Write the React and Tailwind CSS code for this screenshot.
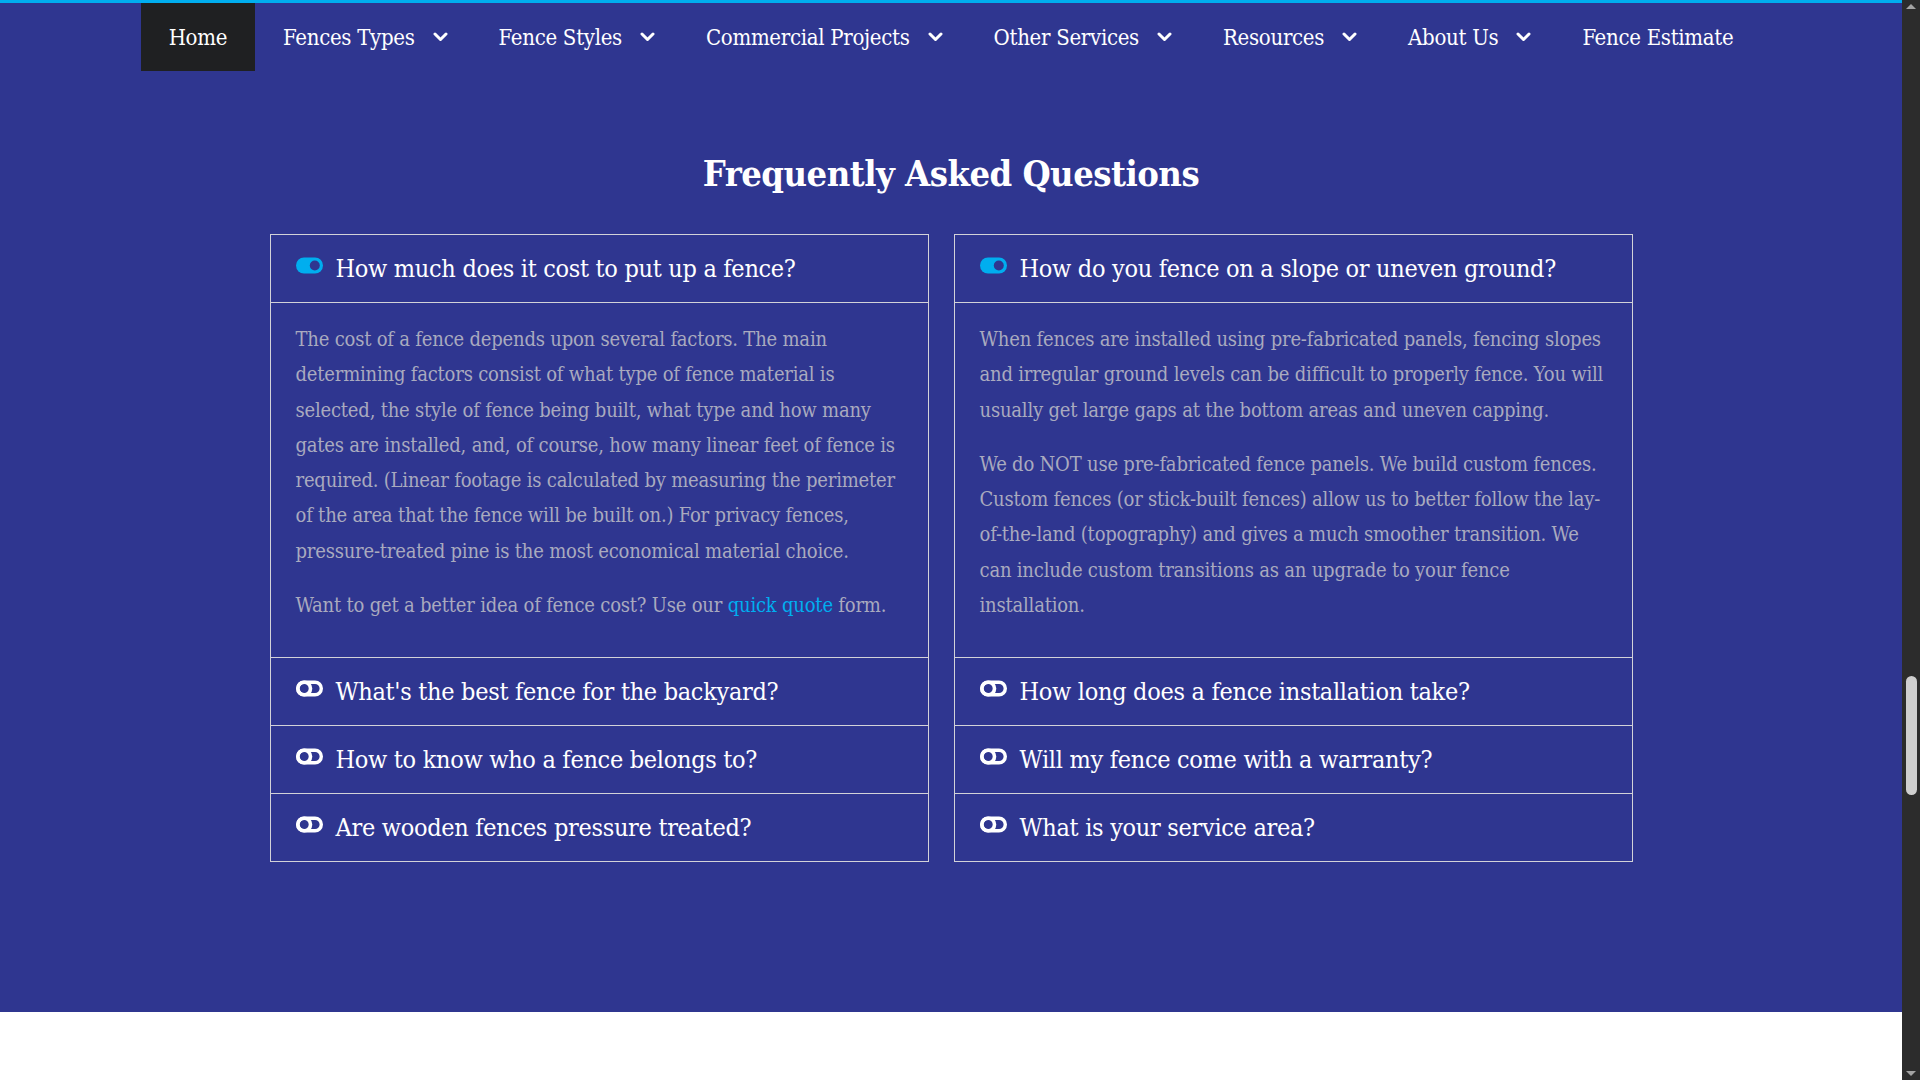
import React from "react";

const navItems = [
  { label: "Home", active: true },
  { label: "Fences Types", drop: true },
  { label: "Fence Styles", drop: true },
  { label: "Commercial Projects", drop: true },
  { label: "Other Services", drop: true },
  { label: "Resources", drop: true },
  { label: "About Us", drop: true },
  { label: "Fence Estimate" },
];

const leftQs = [
  "What's the best fence for the backyard?",
  "How to know who a fence belongs to?",
  "Are wooden fences pressure treated?",
];
const rightQs = [
  "How long does a fence installation take?",
  "Will my fence come with a warranty?",
  "What is your service area?",
];

function Chevron() {
  return (
    <svg className="ml-[18px] w-[15px] h-[10px] shrink-0" viewBox="0 0 15 10" fill="none">
      <polyline points="2,2 7.5,7.5 13,2" stroke="white" strokeWidth="3" strokeLinecap="round" strokeLinejoin="round" />
    </svg>
  );
}

function ToggleOn() {
  return (
    <svg className="w-[27px] h-[17px] -mt-[7px] shrink-0" viewBox="0 0 27 17">
      <rect x="0" y="0.5" width="27" height="16" rx="8" fill="#00aeef" />
      <circle cx="18.8" cy="8.5" r="5" fill="#2f3690" />
    </svg>
  );
}

function ToggleOff() {
  return (
    <svg className="w-[27px] h-[17px] -mt-[7px] shrink-0" viewBox="0 0 27 17" fill="none">
      <rect x="1.7" y="2.2" width="23.6" height="12.6" rx="6.3" stroke="white" strokeWidth="3.4" />
      <circle cx="8.2" cy="8.5" r="6.3" stroke="white" strokeWidth="3.6" />
    </svg>
  );
}

function Header({ open, q }) {
  return (
    <div className="h-[68px] border-b border-[#d2d2d8] flex items-center px-[25px] gap-[13px]">
      {open ? <ToggleOn /> : <ToggleOff />}
      <span className="text-white text-[25px] tracking-[-0.3px] whitespace-nowrap">{q}</span>
    </div>
  );
}

function Lines({ lines }) {
  return (
    <p className="mb-[19px] last:mb-0">
      {lines.map((l, i) => (
        <span key={i} className="block whitespace-nowrap">
          {l}
        </span>
      ))}
    </p>
  );
}

const answerCls =
  "border-b border-[#d2d2d8] px-[25px] pt-[19px] pb-[34px] text-[20px] leading-[35.3px] tracking-[-0.2px] text-[#a9aabf]";

export default function App() {
  return (
    <div className="flex w-full h-[1080px] overflow-hidden font-['DejaVu_Serif_Condensed','DejaVu_Serif',serif]">
      <div className="flex-1 flex flex-col">
        <div className="bg-[#2f3690] border-t-[3px] border-[#00aeef] pb-[150px]">
          <nav className="flex justify-center">
            <div className="flex">
              {navItems.map((n) => (
                <div
                  key={n.label}
                  className={
                    "h-[68px] flex items-center pl-[28px] text-white text-[22px] tracking-[-0.3px] whitespace-nowrap " +
                    (n.drop ? "pr-[23px] " : "pr-[28px] ") +
                    (n.active ? "bg-[#1f2022]" : "")
                  }
                >
                  <span>{n.label}</span>
                  {n.drop && <Chevron />}
                </div>
              ))}
            </div>
          </nav>
          <h2 className="mt-[78px] text-center text-white text-[36px] leading-[48px] tracking-[-0.5px] font-bold">
            Frequently Asked Questions
          </h2>
          <div className="mt-[37px] flex justify-center gap-[25px]">
            <div className="w-[659px] border-x border-t border-[#d2d2d8]">
              <Header open q="How much does it cost to put up a fence?" />
              <div className={answerCls}>
                <Lines
                  lines={[
                    "The cost of a fence depends upon several factors. The main",
                    "determining factors consist of what type of fence material is",
                    "selected, the style of fence being built, what type and how many",
                    "gates are installed, and, of course, how many linear feet of fence is",
                    "required. (Linear footage is calculated by measuring the perimeter",
                    "of the area that the fence will be built on.) For privacy fences,",
                    "pressure-treated pine is the most economical material choice.",
                  ]}
                />
                <p className="whitespace-nowrap">
                  Want to get a better idea of fence cost? Use our{" "}
                  <a className="text-[#00aeef]">quick quote</a> form.
                </p>
              </div>
              {leftQs.map((q) => (
                <Header key={q} q={q} />
              ))}
            </div>
            <div className="w-[679px] border-x border-t border-[#d2d2d8]">
              <Header open q="How do you fence on a slope or uneven ground?" />
              <div className={answerCls}>
                <Lines
                  lines={[
                    "When fences are installed using pre-fabricated panels, fencing slopes",
                    "and irregular ground levels can be difficult to properly fence. You will",
                    "usually get large gaps at the bottom areas and uneven capping.",
                  ]}
                />
                <Lines
                  lines={[
                    "We do NOT use pre-fabricated fence panels. We build custom fences.",
                    "Custom fences (or stick-built fences) allow us to better follow the lay-",
                    "of-the-land (topography) and gives a much smoother transition. We",
                    "can include custom transitions as an upgrade to your fence",
                    "installation.",
                  ]}
                />
              </div>
              {rightQs.map((q) => (
                <Header key={q} q={q} />
              ))}
            </div>
          </div>
        </div>
        <div className="flex-1 bg-white" />
      </div>
      <div className="w-[18px] bg-[#2c2c2c] flex flex-col items-center">
        <div className="mt-[4px] w-0 h-0 border-x-[5px] border-x-transparent border-b-[5px] border-b-[#a3a3a3]" />
        <div className="mt-[667px] w-[11px] h-[119px] rounded-full bg-[#cfcfcf]" />
        <div className="mt-auto mb-[4px] w-0 h-0 border-x-[5px] border-x-transparent border-t-[5px] border-t-[#a3a3a3]" />
      </div>
    </div>
  );
}
